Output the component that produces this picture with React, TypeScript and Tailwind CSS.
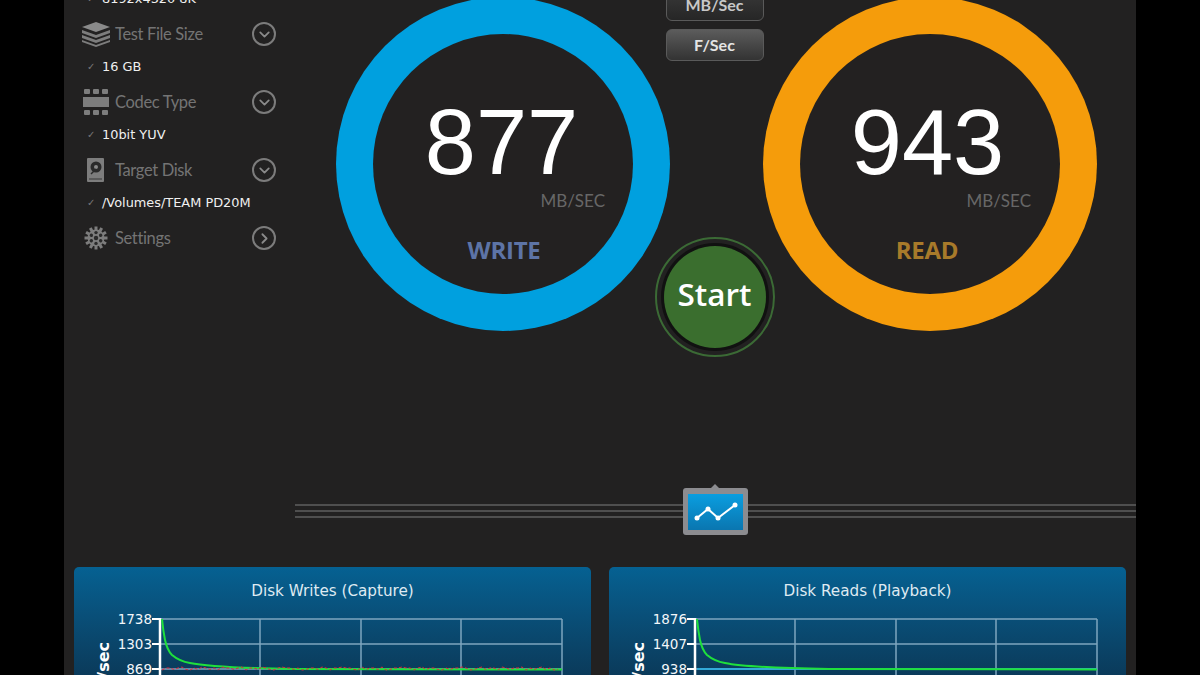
import { ChevronDown, ChevronRight } from "lucide-react";

const sans = "font-['Lato','Open_Sans',sans-serif]";
const verdana = "font-['DejaVu_Sans',sans-serif]";

function StackIcon() {
    return (
        <svg width="30" height="26" viewBox="0 0 30 26" fill="#7d7d7d">
            <path d="M15 1 L29 6 L15 11 L1 6 Z" fill="#8a8a8a" />
            <path d="M1 9 L15 14 L29 9 L29 12 L15 17 L1 12 Z" />
            <path d="M1 14 L15 19 L29 14 L29 17 L15 22 L1 17 Z" />
            <path d="M1 19 L15 24 L29 19 L29 21 L15 26 L1 21 Z" />
        </svg>
    );
}

function CodecIcon() {
    return (
        <svg width="26" height="26" viewBox="0 0 26 26" fill="#7d7d7d">
            <rect x="1" y="0" width="6" height="5" rx="1" />
            <rect x="10" y="0" width="6" height="5" rx="1" />
            <rect x="19" y="0" width="6" height="5" rx="1" />
            <rect x="0" y="8" width="26" height="10" />
            <rect x="1" y="21" width="6" height="5" rx="1" />
            <rect x="10" y="21" width="6" height="5" rx="1" />
            <rect x="19" y="21" width="6" height="5" rx="1" />
        </svg>
    );
}

function DiskIcon() {
    return (
        <svg width="17" height="24" viewBox="0 0 17 24">
            <rect width="17" height="24" rx="1" fill="#7d7d7d" />
            <circle cx="9" cy="9" r="5.5" fill="#2a2a2a" />
            <circle cx="9" cy="9" r="2" fill="#8a8a8a" />
            <path d="M4 16 L9 11" stroke="#2a2a2a" strokeWidth="1.5" />
            <rect x="2" y="20" width="13" height="2" fill="#5a5a5a" />
        </svg>
    );
}

function GearIcon() {
    const teeth = Array.from({ length: 12 }, (_, i) => i * 30);
    return (
        <svg width="24" height="24" viewBox="0 0 24 24">
            {teeth.map((a) => (
                <rect key={a} x="10.5" y="0.5" width="3" height="5" fill="#7d7d7d" transform={`rotate(${a} 12 12)`} />
            ))}
            <circle cx="12" cy="12" r="8.5" fill="#7d7d7d" />
            <circle cx="12" cy="12" r="2.2" fill="#2a2a2a" />
            {[0, 60, 120, 180, 240, 300].map((a) => (
                <circle key={a} cx="12" cy="6.6" r="1.7" fill="#2a2a2a" transform={`rotate(${a} 12 12)`} />
            ))}
        </svg>
    );
}

function SideHeading({ icon, label, open = true }: { icon: React.ReactNode; label: string; open?: boolean }) {
    return (
        <div className="flex h-[34px] items-center">
            <div className="flex w-[37px] shrink-0 items-center justify-center pr-[2px]">{icon}</div>
            <span className={`${sans} flex-1 text-[16.5px] tracking-[-0.35px] text-[#747474]`}>{label}</span>
            <div className="flex h-[24px] w-[24px] items-center justify-center rounded-full border-2 border-[#7c7c7c] text-[#8a8a8a]">
                {open ? <ChevronDown size={17} strokeWidth={2.5} /> : <ChevronRight size={17} strokeWidth={2.5} />}
            </div>
        </div>
    );
}

function SideValue({ text }: { text: string }) {
    return (
        <div className="flex h-[34px] items-start pt-[7px]">
            <span className={`${verdana} w-[24px] shrink-0 pl-[9px] text-[10px] leading-[18px] text-[#777]`}>✓</span>
            <span className={`${verdana} text-[12.9px] leading-[18px] text-[#f0f0f0]`}>{text}</span>
        </div>
    );
}

function Ring({ color, value, valueClass, unitClass, label, labelClass }: { color: string; value: string; valueClass: string; unitClass: string; label: string; labelClass: string }) {
    return (
        <div className={`flex h-[334px] w-[334px] shrink-0 items-center justify-center rounded-full ${color}`}>
            <div className="flex h-[260px] w-[260px] flex-col rounded-full bg-[#232121]">
                <div className={`mt-[56px] text-center font-['Liberation_Sans',sans-serif] text-[92px] leading-[104px] text-white ${valueClass}`}>{value}</div>
                <div className={`${sans} -mt-[4px] text-right text-[17px] leading-[22px] text-[#676767] ${unitClass}`}>MB/SEC</div>
                <div className={`font-['Open_Sans',sans-serif] mt-[23px] text-center text-[24px] leading-[30px] font-bold tracking-[-0.3px] ${labelClass}`}>{label}</div>
            </div>
        </div>
    );
}

function UnitButton({ label, active }: { label: string; active?: boolean }) {
    return (
        <div
            className={`${sans} flex h-[32px] w-[98px] shrink-0 items-center justify-center rounded-[6px] border border-[#5a5a5a] text-[16px] font-bold ${
                active ? "bg-gradient-to-b from-[#5c5c5c] to-[#333] text-[#e4e4e4]" : "bg-gradient-to-b from-[#3a3a3a] to-[#262626] text-[#c8c8c8]"
            }`}
        >
            {label}
        </div>
    );
}

function Chart({ title, ticks, red }: { title: string; ticks: string[]; red?: boolean }) {
    const gridX = [186, 287, 387, 488];
    const gridY = [4, 29, 54, 79, 104];
    const jitter = Array.from({ length: 100 }, (_, i) => {
        const y = 53.5 + (i % 7 === 0 ? 1.5 : i % 5 === 0 ? -1.5 : i % 3 === 0 ? 1 : -0.5);
        return `${88 + i * 4},${y}`;
    }).join(" ");
    return (
        <div className="h-[130px] w-[517px] rounded-[5px] bg-gradient-to-b from-[#056192] to-[#0a3350]">
            <div className={`${verdana} h-[48px] pt-[14px] text-center text-[15.2px] leading-[20px] text-[#dfeaf2]`}>{title}</div>
            <svg width="517" height="82" viewBox="0 0 517 82" className="block overflow-visible">
                {gridX.map((x) => (
                    <line key={x} x1={x} y1="4" x2={x} y2="82" stroke="#7ea6bf" strokeWidth="1.5" />
                ))}
                {gridY.map((y) => (
                    <line key={y} x1="86" y1={y} x2="488" y2={y} stroke="#7ea6bf" strokeWidth="1.5" />
                ))}
                <line x1="86" y1="3" x2="86" y2="82" stroke="#fff" strokeWidth="2.5" />
                {ticks.map((t, i) => (
                    <g key={t}>
                        <line x1="78" y1={4 + i * 25} x2="86" y2={4 + i * 25} stroke="#fff" strokeWidth="2" />
                        <text x="78" y={9 + i * 25} textAnchor="end" fill="#f2f6f9" fontFamily="DejaVu Sans" fontSize="13.5">
                            {t}
                        </text>
                    </g>
                ))}
                <text transform="translate(35 27) rotate(-90)" textAnchor="end" fill="#fff" fontFamily="DejaVu Sans" fontWeight="700" fontSize="16">
                    MB/sec
                </text>
                {!red && <line x1="88" y1="54" x2="488" y2="54" stroke="#23b5e8" strokeWidth="1.5" />}
                <path d="M88 4 C89 14 90 20 91 25 C93 34 96 38 98 40 C104 45 110 47 116 48 C130 51 160 53 220 54 L488 54.5" fill="none" stroke="#1fe03c" strokeWidth="2" />
                {red && <polyline points={jitter} fill="none" stroke="#e0263c" strokeWidth="1" strokeDasharray="3 2" />}
            </svg>
        </div>
    );
}

export default function App() {
    return (
        <div className="flex h-[675px] justify-center overflow-hidden bg-black">
            <div className="h-[900px] w-[1072px] shrink-0 bg-[#222121]">
                {/* Top section, scrolled slightly past the window */}
                <div className="-mt-[17px] flex h-[521px]">
                    <aside className="w-[231px] shrink-0 pl-[14px] pr-[19px]">
                        <SideValue text="8192x4320 8K" />
                        <SideHeading icon={<StackIcon />} label="Test File Size" />
                        <SideValue text="16 GB" />
                        <SideHeading icon={<CodecIcon />} label="Codec Type" />
                        <SideValue text="10bit YUV" />
                        <SideHeading icon={<DiskIcon />} label="Target Disk" />
                        <SideValue text="/Volumes/TEAM PD20M" />
                        <SideHeading icon={<GearIcon />} label="Settings" open={false} />
                    </aside>

                    <div className="flex pl-[41px] pt-[14px]">
                        <Ring color="bg-[#00a0df]" value="877" valueClass="pr-[3px]" unitClass="pr-[28px]" label="WRITE" labelClass="text-[#5d74a6] pl-[2px]" />
                        <div className="z-10 -mt-[8px] flex w-[93px] shrink-0 flex-col items-center pr-[4px]">
                            <UnitButton label="MB/Sec" />
                            <div className="h-[8px] shrink-0" />
                            <UnitButton label="F/Sec" active />
                            <div className="mt-[176px] flex h-[120px] w-[120px] shrink-0 items-center justify-center rounded-full border-2 border-[#3b6a35] bg-[#222121]">
                                <div className="flex h-[108px] w-[108px] items-center justify-center rounded-full bg-[#111]">
                                    <div className="flex h-[102px] w-[102px] items-center justify-center rounded-full bg-[#3a6e2e] pb-[7px] font-['Open_Sans',sans-serif] text-[31.5px] font-semibold text-white">
                                        Start
                                    </div>
                                </div>
                            </div>
                        </div>
                        <Ring color="bg-[#f59c0b]" value="943" valueClass="pr-[5px]" unitClass="pr-[29px]" label="READ" labelClass="text-[#a87a2a] pr-[6px]" />
                    </div>
                </div>

                {/* Divider with chart toggle */}
                <div className="relative ml-[231px] flex h-[15px] flex-col gap-[4px]">
                    <div className="h-[2px] bg-[#4f4f4f]" />
                    <div className="h-[2px] bg-[#4f4f4f]" />
                    <div className="h-[2px] bg-[#4f4f4f]" />
                    <div className="absolute left-[388px] top-[-16px] flex h-[47px] w-[65px] items-center justify-center rounded-[3px] bg-[#8c8c90]">
                        <div className="absolute left-[28px] top-[-4px] h-0 w-0 border-x-[4px] border-b-[4px] border-x-transparent border-b-[#8c8c90]" />
                        <div className="flex h-[36px] w-[55px] items-center justify-center bg-gradient-to-b from-[#0a9ee0] to-[#0a76b0]">
                            <svg width="55" height="36" viewBox="0 0 55 36" fill="#fff">
                                <polyline points="9,24 20,15 30,24 47,11" fill="none" stroke="#fff" strokeWidth="2" />
                                <circle cx="9" cy="24" r="2.5" />
                                <circle cx="20" cy="15" r="2.5" />
                                <circle cx="30" cy="24" r="2.5" />
                                <circle cx="47" cy="11" r="2.5" />
                            </svg>
                        </div>
                    </div>
                </div>

                {/* Charts */}
                <div className="mt-[48px] flex gap-[18px] px-[10px]">
                    <Chart title="Disk Writes (Capture)" ticks={["1738", "1303", "869"]} red />
                    <Chart title="Disk Reads (Playback)" ticks={["1876", "1407", "938"]} />
                </div>
            </div>
        </div>
    );
}
